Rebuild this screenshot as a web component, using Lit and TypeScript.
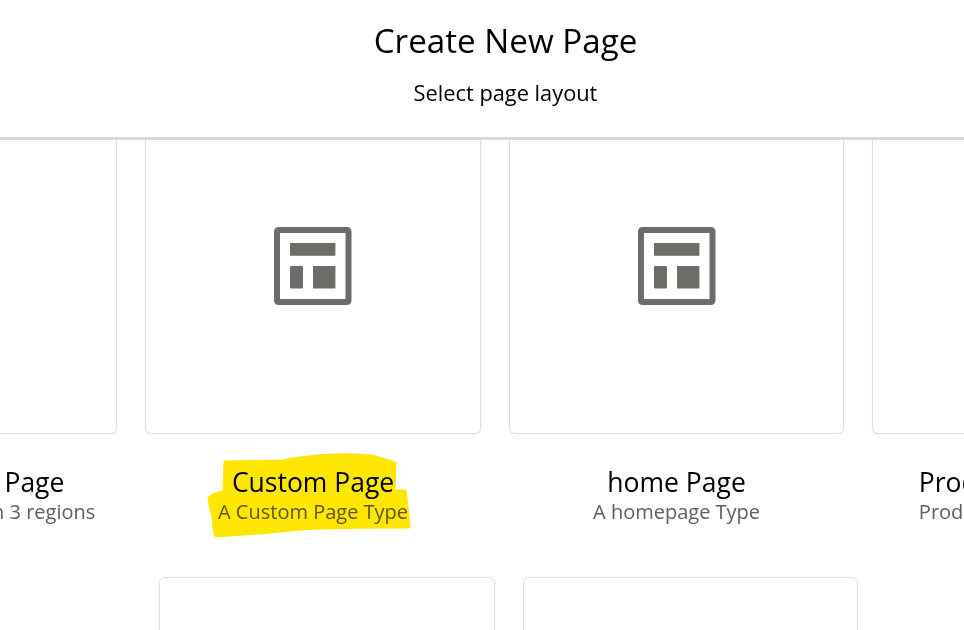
import { LitElement, html, css, svg } from "lit";
import { customElement } from "lit/decorators.js";

const icon = html`<svg class="icon" width="78" height="78" viewBox="0 0 78 78" aria-hidden="true">
  <rect x="3" y="3" width="71.5" height="72" rx="1.5" fill="none" stroke="currentColor" stroke-width="6"/>
  <rect x="16" y="16" width="45.4" height="12.7" rx="0.5" fill="currentColor"/>
  <rect x="16" y="39" width="13" height="22.4" rx="1.2" fill="currentColor"/>
  <rect x="39" y="39" width="22.4" height="22.4" rx="0.5" fill="currentColor"/>
</svg>`;

const row1 = [
  { t: "Three Region Page", s: "A Page has content in 3 regions" },
  { t: "Custom Page", s: "A Custom Page Type" },
  { t: "home Page", s: "A homepage Type" },
  { t: "Product Detail Page", s: "Product Details Page Type" },
];

@customElement("app-root")
export class AppRoot extends LitElement {
  static styles = css`
    :host {
      display: block;
      position: relative;
      width: 964px;
      height: 630px;
      overflow: hidden;
      background: #fff;
      font-family: "Open Sans", "Noto Sans", sans-serif;
      color: #000;
    }
    header {
      height: 137px;
      padding-left: 47px;
      text-align: center;
      border-bottom: 3px solid #dddbd9;
    }
    h1 {
      margin: 0;
      padding-top: 19px;
      font-size: 33.2px;
      line-height: 44px;
      font-weight: 400;
    }
    .sub {
      margin: 0;
      padding-top: 15px;
      font-size: 21.8px;
      line-height: 30px;
    }
    .row {
      display: flex;
      gap: 28px;
      width: max-content;
    }
    .row.first {
      margin-left: -218.2px;
    }
    .row.second {
      margin-left: 159px;
      margin-top: 52px;
    }
    .item {
      width: 335.5px;
      flex: none;
    }
    .card {
      box-sizing: border-box;
      width: 100%;
      border: 1px solid #e1dfdd;
      border-radius: 6px;
      background: #fff;
      box-shadow: 0 1px 3px rgba(0, 0, 0, 0.05);
      display: flex;
      align-items: center;
      justify-content: center;
      color: #6e6c68;
    }
    .first .card {
      height: 294px;
      border-top: none;
      border-top-left-radius: 0;
      border-top-right-radius: 0;
      padding-bottom: 41px;
    }
    .second .card {
      height: 80px;
    }
    .icon {
      display: block;
    }
    .title {
      margin-top: 30px;
      text-align: center;
      white-space: nowrap;
      font-size: 26.5px;
      line-height: 36px;
    }
    .desc {
      text-align: center;
      white-space: nowrap;
      color: #605e5c;
      font-size: 20px;
      line-height: 26px;
      margin-top: -1px;
    }
    .hl {
      position: absolute;
      left: 0;
      top: 0;
      mix-blend-mode: multiply;
      pointer-events: none;
    }
  `;

  render() {
    return html`
      <header>
        <h1>Create New Page</h1>
        <p class="sub">Select page layout</p>
      </header>
      <div class="row first">
        ${row1.map(
          (c) => html`<div class="item">
            <div class="card">${icon}</div>
            <div class="title">${c.t}</div>
            <div class="desc">${c.s}</div>
          </div>`
        )}
      </div>
      <div class="row second">
        <div class="item"><div class="card"></div></div>
        <div class="item"><div class="card"></div></div>
      </div>
      <svg class="hl" width="964" height="630" aria-hidden="true">
        ${svg`<path fill="#ffe600" stroke="#ffe600" stroke-width="3" stroke-linejoin="round" d="M225 462 L283 461 C300 457 316 456 333 455 C350 454 362 455 372 456 L395 463 L394 491 L405 491 C407 505 408 515 409 527 C370 527 335 527 300 529 C280 531 262 533 243 534 L216 536 C213 530 214 522 213 516 C211 510 210 505 209 498 C212 495 218 493 224 492 Z"/>`}
      </svg>
    `;
  }
}
